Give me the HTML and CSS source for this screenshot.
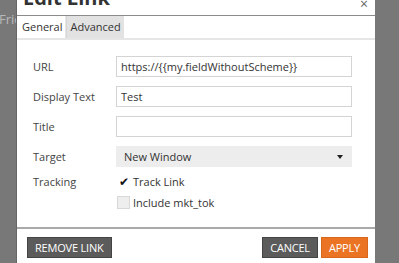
FILE: index.html
```html
<!DOCTYPE html>
<html lang="en">
<head>
  <meta charset="UTF-8">
  <title>Edit Link</title>
  <link rel="stylesheet" href="styles.css">
</head>
<body>
  <div class="page">
    <div class="behind">Frie</div>

    <div class="dialog">
      <div class="dialog-head">
        <h1>Edit Link</h1>
        <span class="close">&times;</span>
      </div>

      <div class="tabs">
        <div class="tab active">General</div>
        <div class="tab">Advanced</div>
      </div>

      <div class="form">
        <div class="row">
          <label>URL</label>
          <input type="text" value="https://{{my.fieldWithoutScheme}}">
        </div>
        <div class="row">
          <label>Display Text</label>
          <input type="text" value="Test">
        </div>
        <div class="row">
          <label>Title</label>
          <input type="text" value="">
        </div>
        <div class="row">
          <label>Target</label>
          <div class="select">New Window <span class="caret"></span></div>
        </div>
        <div class="row check-row">
          <label>Tracking</label>
          <div class="checks">
            <div class="check"><span class="box checked">&#10004;</span>Track Link</div>
            <div class="check"><span class="box disabled"></span>Include mkt_tok</div>
          </div>
        </div>
      </div>

      <div class="dialog-foot">
        <button class="btn">Remove Link</button>
        <div class="right">
          <button class="btn">Cancel</button>
          <button class="btn primary">Apply</button>
        </div>
      </div>
    </div>

    <div class="behind"></div>
  </div>
</body>
</html>
```

FILE: styles.css
```css
* { box-sizing: border-box; margin: 0; padding: 0; }
body {
  font-family: 'Open Sans', sans-serif;
  background: #787878;
  color: #444;
  overflow: hidden;
}
.page {
  display: flex;
  height: 263px;
}
.behind {
  flex: 1;
  color: #b8b8b8;
  font-size: 13px;
  padding-top: 10px;
  overflow: hidden;
}
.behind:first-child {
  flex: 0 0 17px;
  border-right: 1px solid #666;
  text-indent: -1px;
}
.dialog {
  width: 358px;
  background: #fff;
  display: flex;
  flex-direction: column;
}
.dialog-head {
  height: 16px;
  border-bottom: 1px solid #8a8a8a;
  display: flex;
  justify-content: space-between;
  overflow: hidden;
}
.dialog-head h1 {
  font-size: 20px;
  font-weight: 700;
  line-height: 22px;
  margin: -13px 0 0 6px;
  color: #333;
}
.close {
  font-size: 14px;
  line-height: 8px;
  color: #666;
  margin-right: 7px;
}
.tabs {
  display: flex;
  padding-left: 3px;
  border-bottom: 2px solid #e6e6e6;
}
.tab {
  font-size: 11px;
  line-height: 22px;
  padding: 0 3px;
  color: #333;
  background: #e2e2e2;
  border-left: 1px solid #d6d6d6;
}
.tab.active {
  background: #fff;
  border-left: none;
  border-right: 1px solid #e6e6e6;
  padding: 0 3px 0 2px;
}
.form {
  padding: 16px 21px 0 16px;
  height: 187px;
}
.row {
  display: flex;
  align-items: center;
  height: 21px;
  margin-bottom: 9px;
}
.row label {
  width: 83px;
  font-size: 11px;
  color: #444;
}
.row input {
  width: 236px;
  height: 21px;
  border: 1px solid #d4d4d4;
  padding: 0 4px;
  font-family: 'Open Sans', sans-serif;
  font-size: 11px;
  color: #333;
}
.select {
  width: 236px;
  height: 21px;
  background: #ededed;
  font-size: 11px;
  color: #333;
  padding: 0 8px;
  display: flex;
  align-items: center;
  justify-content: space-between;
}
.caret {
  border-left: 3px solid transparent;
  border-right: 3px solid transparent;
  border-top: 4px solid #222;
  margin-right: 1px;
}
.check-row {
  align-items: flex-start;
  height: auto;
  margin-top: -3px;
}
.check-row label {
  padding-top: 1px;
}
.checks {
  display: flex;
  flex-direction: column;
  gap: 4px;
}
.check {
  display: flex;
  align-items: center;
  font-size: 11px;
  color: #333;
  height: 17px;
}
.box {
  width: 13px;
  height: 13px;
  margin: 0 3px 0 1px;
  font-size: 12px;
  line-height: 13px;
  color: #111;
  text-align: center;
}
.box.disabled {
  background: #eee;
  border: 1px solid #d8d8d8;
}
.dialog-foot {
  border-top: 2px solid #a9a9a9;
  padding: 8px 7px 0 10px;
  display: flex;
  justify-content: space-between;
  flex: 1;
}
.right {
  display: flex;
  gap: 3px;
}
.btn {
  height: 21px;
  padding: 0 7px;
  background: #5b5b5b;
  border: 1px solid #444;
  color: #fff;
  font-family: 'Open Sans', sans-serif;
  font-size: 11px;
  text-transform: uppercase;
  letter-spacing: -0.2px;
}
.btn.primary {
  background: #ea7424;
  border-color: #d9661a;
}
```
